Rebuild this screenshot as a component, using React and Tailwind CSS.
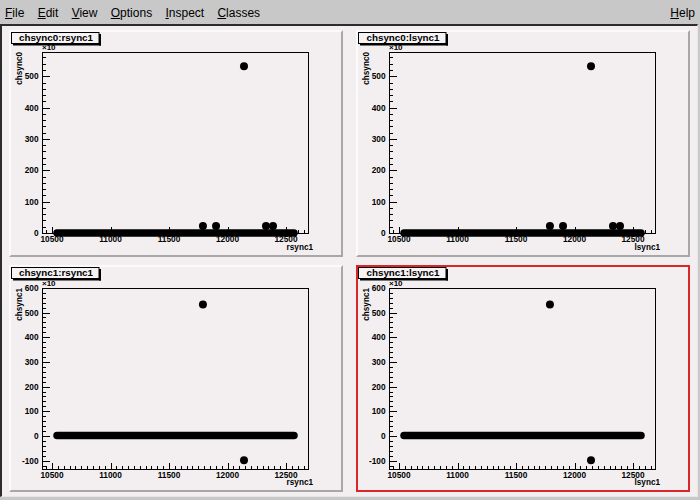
import React from 'react';

const menus = ['File', 'Edit', 'View', 'Options', 'Inspect', 'Classes'];

// x position (left column coordinates) of an rsync value
const X = (v) => 52 + (v - 10500) * 0.117;

const layouts = {
  top: {
    oy: 32,
    top: 52,
    bot: 233,
    y: (v) => 233 - v * 0.3135,
    yMin: 0,
    yMax: 577,
    labels: [0, 100, 200, 300, 400, 500],
    xLab: 242,
    xTitle: 250,
    band: 233,
    dots: [
      [11790, 22],
      [11902, 22],
      [12329, 22],
      [12389, 22],
      [12141, 532],
    ],
  },
  bottom: {
    oy: 267,
    top: 288,
    bot: 469,
    y: (v) => 436 - v * 0.247,
    yMin: -133,
    yMax: 600,
    labels: [-100, 0, 100, 200, 300, 400, 500, 600],
    xLab: 477.5,
    xTitle: 485,
    band: 435.5,
    dots: [
      [11790, 532],
      [12141, -98],
    ],
  },
};

function Plot({ kind, title, yTitle, xTitle }) {
  const L = layouts[kind];
  const yTicks = [];
  for (let v = Math.ceil(L.yMin / 20) * 20; v <= L.yMax; v += 20) yTicks.push(v);
  const xTicks = [];
  for (let v = 10450; v <= 12650; v += 50) xTicks.push(v);

  return (
    <svg
      width="330"
      height="223"
      viewBox={`11 ${L.oy} 330 223`}
      className="block font-['Liberation_Sans',Arial,sans-serif]"
    >
      {/* frame */}
      <rect x="42.5" y={L.top + 0.5} width="266" height={L.bot - L.top} fill="none" stroke="#000" strokeWidth="1" />

      {/* y axis ticks */}
      {yTicks.map((v) => {
        const yy = Math.round(L.y(v)) + 0.5;
        const major = v % 100 === 0;
        return <line key={'y' + v} x1="42" x2={major ? 50 : 46} y1={yy} y2={yy} stroke="#000" strokeWidth="1" />;
      })}
      {L.labels.map((v) => (
        <text key={'yl' + v} x="38.5" y={L.y(v) + 3} textAnchor="end" fontSize="8.3" fontWeight="bold">
          {v}
        </text>
      ))}
      <text x="42" y={L.top - 2} fontSize="8" fontWeight="bold">
        ×10
      </text>
      <text transform={`translate(22 ${L.top}) rotate(-90)`} textAnchor="end" fontSize="8.2" fontWeight="bold">
        {yTitle}
      </text>

      {/* x axis ticks */}
      {xTicks.map((v) => {
        const xx = Math.round(X(v)) + 0.5;
        const major = v % 500 === 0;
        return <line key={'x' + v} x1={xx} x2={xx} y1={L.bot} y2={L.bot - (major ? 6 : 3)} stroke="#000" strokeWidth="1" />;
      })}
      {[10500, 11000, 11500, 12000, 12500].map((v) => (
        <text key={'xl' + v} x={X(v)} y={L.xLab} textAnchor="middle" fontSize="8.3" fontWeight="bold">
          {v}
        </text>
      ))}
      <text x="313" y={L.xTitle} textAnchor="end" fontSize="8.2" fontWeight="bold">
        {xTitle}
      </text>

      {/* data */}
      <line x1="57" x2="294" y1={L.band} y2={L.band} stroke="#000" strokeWidth="7.5" strokeLinecap="round" />
      {L.dots.map(([a, b], i) => (
        <circle key={i} cx={X(a)} cy={L.y(b)} r="4" fill="#000" />
      ))}

      {/* title box */}
      <rect x="11.5" y={L.oy + 0.5} width="87.5" height="11" fill="#f6f3f5" stroke="#000" strokeWidth="1" />
      <rect x="99" y={L.oy + 2} width="2" height="11.5" fill="#000" />
      <rect x="13" y={L.oy + 11.5} width="88" height="2" fill="#000" />
      <text x="56" y={L.oy + 8.8} textAnchor="middle" fontSize="9.8" fontWeight="bold">
        {title}
      </text>
    </svg>
  );
}

function Pad({ selected, children }) {
  return (
    <div
      className={`w-[334px] h-[227px] border-2 bg-[#f3eff1] ${
        selected
          ? 'border-[#d9262b]'
          : 'border-t-[#fbfafb] border-l-[#fbfafb] border-r-[#a9a6a8] border-b-[#a9a6a8]'
      }`}
    >
      {children}
    </div>
  );
}

export default function App() {
  return (
    <div className="w-[700px] h-[500px] bg-[#c8c8c8] flex flex-col overflow-hidden font-['Liberation_Sans',Arial,sans-serif] text-black">
      {/* menu bar */}
      <div className="h-[24px] flex items-center pl-[5px] pr-[5px] pt-[1px] text-[12px] gap-[13.3px] shrink-0">
        {menus.map((m) => (
          <span key={m}>
            <span className="underline">{m[0]}</span>
            {m.slice(1)}
          </span>
        ))}
        <span className="ml-auto">
          <span className="underline">H</span>elp
        </span>
      </div>

      {/* canvas */}
      <div className="flex-1 mr-[2px] mb-[3px] border-t-2 border-l-2 border-t-[#2c2c2c] border-l-[#2c2c2c] border-r border-b border-r-[#e6e6e6] border-b-[#e6e6e6] bg-[#f3eff1] pl-[7px] pt-[4px]">
        <div className="grid grid-cols-[334px_334px] gap-x-[13px] gap-y-[8px]">
          <Pad>
            <Plot kind="top" title="chsync0:rsync1" yTitle="chsync0" xTitle="rsync1" />
          </Pad>
          <Pad>
            <Plot kind="top" title="chsync0:lsync1" yTitle="chsync0" xTitle="lsync1" />
          </Pad>
          <Pad>
            <Plot kind="bottom" title="chsync1:rsync1" yTitle="chsync1" xTitle="rsync1" />
          </Pad>
          <Pad selected>
            <Plot kind="bottom" title="chsync1:lsync1" yTitle="chsync1" xTitle="lsync1" />
          </Pad>
        </div>
      </div>
    </div>
  );
}
